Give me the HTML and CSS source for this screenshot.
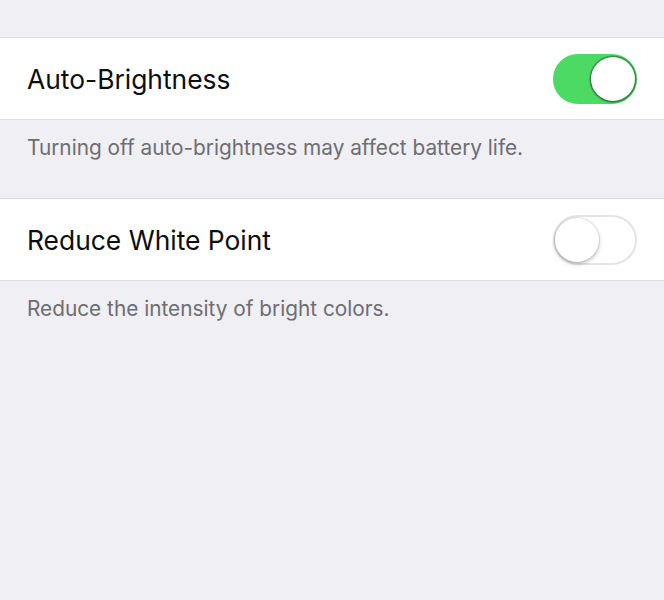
FILE: index.html
```html
<!DOCTYPE html>
<html lang="en">
<head>
    <meta charset="UTF-8">
    <meta name="viewport" content="width=device-width, initial-scale=1.0">
    <title>Display &amp; Brightness</title>
    <link rel="stylesheet" href="styles.css">
</head>
<body>
    <div class="Top"></div>
    <div class="Group">
        <div class="Cell">
            <span class="Label">Auto-Brightness</span>
            <span class="Switch on"><span class="Knob"></span></span>
        </div>
    </div>
    <p class="Footer">Turning off auto-brightness may affect battery life.</p>
    <div class="Group">
        <div class="Cell">
            <span class="Label">Reduce White Point</span>
            <span class="Switch"><span class="Knob"></span></span>
        </div>
    </div>
    <p class="Footer">Reduce the intensity of bright colors.</p>
</body>
</html>
```

FILE: styles.css
```css
body
{
    margin: 0;
    background: #efeff4;
    font-family: Inter, "Noto Sans", sans-serif;
}
.Top
{
    height: 37px;
}
.Group
{
    background: #fff;
    border-top: 1px solid #dcdce1;
    border-bottom: 1px solid #dcdce1;
}
.Cell
{
    height: 81px;
    padding: 0 27px;
    display: flex;
    align-items: center;
    justify-content: space-between;
}
.Label
{
    font-size: 26.4px;
    color: #0d0d0d;
}
.Switch
{
    width: 80px;
    height: 46px;
    border-radius: 25px;
    border: 2px solid #e4e4e6;
    background: #fff;
    display: flex;
    align-items: center;
    justify-content: flex-start;
}
.Switch.on
{
    background: #4cd964;
    border-color: #4cd964;
    justify-content: flex-end;
}
.Knob
{
    width: 44px;
    height: 44px;
    border-radius: 50%;
    background: #fff;
    box-shadow: 0 2px 4px rgba(0, 0, 0, .25), 0 0 0 1px rgba(0, 0, 0, .08);
}
.Switch.on .Knob
{
    box-shadow: 0 1px 3px rgba(0, 0, 0, .3), 0 0 0 1.5px rgba(40, 110, 50, .6);
}
.Footer
{
    margin: 0;
    height: 62px;
    padding: 16px 27px 0;
    font-size: 20.8px;
    line-height: 24px;
    color: #6d6d72;
}
```
